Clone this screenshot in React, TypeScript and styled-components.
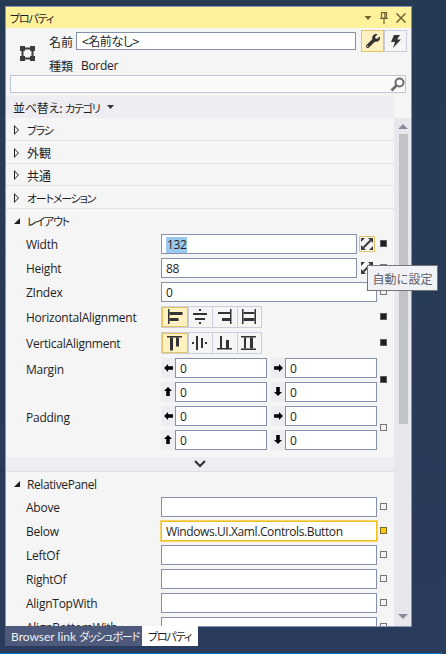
import React from "react";
import styled, { createGlobalStyle } from "styled-components";
import { FaWrench } from "react-icons/fa";

const Global = createGlobalStyle`
  html, body { margin: 0; padding: 0; background: #283a56; }
  * { box-sizing: border-box; }
  body { font-family: "Open Sans", "Noto Sans CJK JP", sans-serif; font-size: 12px; color: #1e1e1e; }
`;

const jp = `"Noto Sans CJK JP", "Noto Sans", sans-serif`;

const Root = styled.div`
  position: relative; width: 446px; height: 654px; overflow: hidden;
  padding: 6px 0 0 5px; display: flex; flex-direction: column;
  background: linear-gradient(180deg, #263a54 0%, #2a3b5b 100%);
`;
const Frame = styled.div`
  width: 407px; height: 621px; flex: none; border: 1px solid #8a94b8; background: #f5f5f5;
  display: flex; flex-direction: column; overflow: hidden;
`;
const Kana = styled.span`
  font-family: ${jp}; font-size: 11px; letter-spacing: -1.2px; font-feature-settings: "palt";
`;
const TitleBar = styled.div`
  height: 21px; flex: none; background: #fff29d; display: flex; align-items: center;
  padding: 0 5px 0 4px; font-family: ${jp}; font-size: 12px; color: #1e1e1e;
`;
const TitleText = styled.span` flex: 1; `;
const TitleTools = styled.div` display: flex; align-items: center; gap: 8px; `;
const Header = styled.div` flex: none; display: flex; flex-direction: column; padding-top: 2px; `;
const Identity = styled.div` display: flex; height: 45px; `;
const KindIcon = styled.div` width: 43px; display: flex; align-items: center; justify-content: center; padding-top: 1px; padding-right: 1px; `;
const IdentityRows = styled.div` flex: 1; display: flex; flex-direction: column; `;
const NameRow = styled.div` height: 22px; display: flex; align-items: center; font-family: ${jp}; `;
const FieldLabel = styled.span` width: 27px; flex: none; font-family: ${jp}; font-size: 12px; `;
const NameBox = styled.div`
  width: 280px; height: 18px; border: 1px solid #8591a8; background: #fff; padding-left: 5px;
  line-height: 15px; font-family: ${jp}; font-size: 12px; font-feature-settings: "palt"; letter-spacing: -0.4px;
`;
const ModeGroup = styled.div` display: flex; margin-left: 5px; `;
const ModeButton = styled.div<{ $on?: boolean }>`
  width: 23px; height: 22px; display: flex; align-items: center; justify-content: center;
  border: 1px solid ${p => (p.$on ? "#e5c365" : "#ccceDB")}; background: ${p => (p.$on ? "#fff2c0" : "#f5f5f5")};
`;
const TypeRow = styled.div` height: 20px; margin-top: 3px; display: flex; align-items: center; `;
const TypeValue = styled.span` margin-left: 5px; font-size: 12px; letter-spacing: -0.3px; `;
const SearchBox = styled.div`
  height: 18px; margin-left: 4px; width: 396px; background: #fafafa; border: 1px solid #c1c5d4;
  display: flex; justify-content: flex-end; align-items: center;
`;
const Body = styled.div` flex: 1; min-height: 0; display: flex; margin-top: 3px; `;
const Content = styled.div` width: 388px; flex: none; overflow: hidden; `;
const SortBar = styled.div`
  height: 22px; background: #eeeef2; display: flex; align-items: center; gap: 7px; padding-left: 7px;
  font-family: ${jp}; font-size: 12px;
`;
const SortLabel = styled.span` white-space: nowrap; font-feature-settings: "palt"; letter-spacing: -0.2px; `;
const Scrollbar = styled.div`
  position: relative; width: 17px; flex: none; display: flex; flex-direction: column; align-items: center;
  background: linear-gradient(#f5f5f5 0 22px, #e8e8ec 22px);
`;
const ScrollUp = styled.div`
  margin-top: 28px; width: 0; height: 0; border-left: 5px solid transparent; border-right: 5px solid transparent;
  border-bottom: 5px solid #8b8d9c;
`;
const ScrollThumb = styled.div` width: 9px; height: 290px; margin-top: 5px; margin-left: 1px; background: #c2c3c9; `;
const ScrollDown = styled.div`
  margin-top: auto; margin-bottom: 7px; width: 0; height: 0; border-left: 5px solid transparent; border-right: 5px solid transparent;
  border-top: 5px solid #8b8d9c;
`;
const Category = styled.div<{ $open?: boolean }>`
  height: 22.75px; display: flex; align-items: center; padding: 2px 0 0 8px; gap: 7px;
  border-bottom: ${p => (p.$open ? "none" : "1px solid #e3e3e6")}; font-family: ${jp}; font-size: 12px;
`;
const Hollow = styled.span`
  width: 0; height: 0; border-left: 5px solid #1e1e1e; border-top: 5px solid transparent; border-bottom: 5px solid transparent;
  position: relative; flex: none; margin-right: 1px;
  &::after { content: ""; position: absolute; left: -4.2px; top: -3px; border-left: 3px solid #f5f5f5; border-top: 3px solid transparent; border-bottom: 3px solid transparent; }
`;
const Expanded = styled.span`
  width: 0; height: 0; border-bottom: 6px solid #1e1e1e; border-left: 6px solid transparent; flex: none;
`;
const PanelTitle = styled.span` font-family: "Open Sans", sans-serif; letter-spacing: -0.4px; `;
const Rows = styled.div` display: flex; flex-direction: column; gap: 4px; padding: 2px 0 0 20px; `;
const Row = styled.div<{ $tall?: boolean }>`
  display: grid; grid-template-columns: 135px 216px 10px; align-items: ${p => (p.$tall ? "start" : "center")};
`;
const Name = styled.span<{ $tall?: boolean }>` font-size: 12px; padding-top: ${p => (p.$tall ? "3px" : "2px")}; white-space: nowrap; letter-spacing: -0.25px; `;
const Value = styled.div<{ $active?: boolean; $w?: number }>`
  height: 20px; width: ${p => p.$w ?? 216}px; background: #fff; padding-left: 4px;
  border: 1px solid ${p => (p.$active ? "#f0c020" : "#8591a8")}; line-height: 20px; font-size: 12px; white-space: nowrap;
  letter-spacing: -0.4px;
  box-shadow: ${p => (p.$active ? "0 0 0 1px #f6d566" : "none")};
`;
const Selected = styled.span` background: #99c9ef; display: inline-block; padding: 0 1px; line-height: 16px; `;
const Marker = styled.span<{ $state: "set" | "none" | "bound" }>`
  width: 7px; height: 7px; margin-left: 3px; display: block; justify-self: start; align-self: center;
  border: 1px solid ${p => (p.$state === "set" ? "#5d5d5d" : p.$state === "bound" ? "#7a6a30" : "#767676")};
  background: ${p => (p.$state === "set" ? "#1e1e1e" : p.$state === "bound" ? "#ffc90e" : "#f5f5f5")};
`;
const WithAuto = styled.div` display: flex; align-items: center; `;
const AutoButton = styled.div<{ $on?: boolean }>`
  width: 16px; height: 16px; margin-left: 2px; flex: none; display: flex; align-items: center; justify-content: center;
  border: 1px solid ${p => (p.$on ? "#e5c365" : "transparent")};
`;
const Segments = styled.div` display: flex; width: 101px; height: 22px; border: 1px solid #ccceDB; `;
const Segment = styled.div<{ $on?: boolean }>`
  flex: 1; display: flex; align-items: center; justify-content: center; background: ${p => (p.$on ? "#fff2c0" : "transparent")};
  border: ${p => (p.$on ? "1px solid #e5c365" : "none")}; border-left: ${p => (p.$on ? "1px solid #e5c365" : "1px solid #ccceDB")};
  &:first-child { border-left: ${p => (p.$on ? "1px solid #e5c365" : "none")}; }
`;
const Thickness = styled.div` display: grid; grid-template-columns: 106px 106px; column-gap: 4px; row-gap: 4px; `;
const Side = styled.div` display: flex; `;
const ArrowCell = styled.div` width: 14px; height: 20px; background: #eeeef2; display: flex; align-items: center; justify-content: center; `;
const Collapse = styled.div`
  height: 15px; margin-top: 7px; background: #eeeef2; border-bottom: 1px solid #e0e0e3; display: flex; align-items: center; justify-content: center;
`;
const TabStrip = styled.div` position: relative; display: flex; height: 20px; margin-top: -1px; flex: none; font-size: 12px; `;
const Tab = styled.div<{ $on?: boolean }>`
  height: 20px; display: flex; align-items: center; gap: 3px; padding: 0 6px; font-family: Lato, "Open Sans", sans-serif; white-space: nowrap;
  width: ${p => (p.$on ? "56px" : "137px")};
  background: ${p => (p.$on ? "#ffffff" : "#4d5a7c")}; color: ${p => (p.$on ? "#1e1e1e" : "#f0f0f0")};
`;
const StatusLine = styled.div` height: 1px; margin: auto 0 0 -5px; width: 442px; background: #007acc; flex: none; `;
const Tooltip = styled.div`
  position: absolute; left: 367px; top: 265px; width: 71px; height: 26px; background: #f1f2f7; border: 1px solid #767676;
  display: flex; align-items: center; justify-content: center; font-family: ${jp}; font-size: 12px; color: #5f6066;
`;

const Border = () => (
  <svg width="15" height="15" viewBox="0 0 15 15" fill="#3c3c3c">
    <path d="M0 0h5v1.5h5V0h5v5h-1.5v5H15v5h-5v-1.5H5V15H0v-5h1.5V5H0zM3.5 5v5H5v1.5h5V10h1.5V5H10V3.5H5V5z" />
  </svg>
);
const Bolt = () => (
  <svg width="10" height="13" viewBox="0 0 10 13" fill="#333"><path d="M3 0h6L6 4.5h4L2 13l2-6H0z" /></svg>
);
const Search = () => (
  <svg width="15" height="15" viewBox="0 0 15 15" fill="none" stroke="#6d6d6d">
    <circle cx="9.5" cy="5.5" r="4" strokeWidth="2" />
    <path d="M6.5 8.5L1.5 13.5" strokeWidth="2.6" />
  </svg>
);
const Pin = () => (
  <svg width="8" height="12" viewBox="0 0 8 12" fill="none" stroke="#6d6330" strokeWidth="1.2">
    <path d="M1.5 .6h5v5.4h-5zM4.8 1v5M0 6.5h8M4 7v5" />
  </svg>
);
const Close = () => (
  <svg width="10" height="10" viewBox="0 0 10 10" stroke="#6d6330" strokeWidth="1.5"><path d="M.5.5l9 9M9.5.5l-9 9" /></svg>
);
const Caret = ({ color, w = 7 }: { color: string; w?: number }) => (
  <svg width={w} height="4" viewBox="0 0 7 4" fill={color}><path d="M0 0h7L3.5 4z" /></svg>
);
const Auto = () => (
  <svg width="12" height="12" viewBox="0 0 12 12" fill="#3a3a3a">
    <path d="M0 0h4L0 4zM12 12H8l4-4zM12 0v5L7 0zM0 12V7l5 5z" />
    <path d="M2.5 9.5l7-7" stroke="#3a3a3a" strokeWidth="2" />
  </svg>
);
const Chevron = () => (
  <svg width="12" height="8" viewBox="0 0 12 8" fill="none" stroke="#333" strokeWidth="2.2"><path d="M1 1l5 5 5-5" /></svg>
);
const arrowPaths: Record<string, string> = {
  left: "M0 4.5L4.5 0v2.5H10v4H4.5V9z",
  right: "M10 4.5L5.5 0v2.5H0v4h5.5V9z",
  up: "M4.5 0L9 4.5H6.5V10h-4V4.5H0z",
  down: "M4.5 10L9 5.5H6.5V0h-4v5.5H0z",
};
const Arrow = ({ dir }: { dir: string }) => {
  const flat = dir === "left" || dir === "right";
  return (
    <svg width={flat ? 9 : 8} height={flat ? 8 : 9} viewBox={flat ? "0 0 10 9" : "0 0 9 10"} fill="#000">
      <path d={arrowPaths[dir]} />
    </svg>
  );
};
const alignGlyphs: Record<string, number[][]> = {
  hl: [[1, 0, 1.5, 15], [2.5, 3, 13, 3], [2.5, 9, 9, 3]],
  hc: [[7, 0, 2, 2], [1, 4, 14, 2], [3, 9, 10, 2], [7, 13, 2, 2]],
  hr: [[13, 0, 1.5, 15], [1, 3, 12, 2], [5, 9, 8, 3]],
  hs: [[1, 0, 1.5, 15], [13.5, 0, 1.5, 15], [2.5, 3, 11, 2], [2.5, 9, 11, 3]],
  vt: [[0, 1, 15, 1.5], [3, 2.5, 3, 13], [9, 2.5, 3, 9]],
  vc: [[0, 7, 2, 2], [4, 1, 2, 14], [9, 3, 2, 10], [13, 7, 2, 2]],
  vb: [[0, 13, 15, 1.5], [3, 1, 2, 12], [9, 5, 3, 8]],
  vs: [[0, 1, 15, 1.5], [0, 13.5, 15, 1.5], [3, 2.5, 2, 11], [9, 2.5, 3, 11]],
};
const Align = ({ name }: { name: string }) => (
  <svg width="16" height="16" viewBox="0 0 16 16" fill="#333">
    {alignGlyphs[name].map((r, i) => <rect key={i} x={r[0]} y={r[1]} width={r[2]} height={r[3]} />)}
  </svg>
);

const SegmentRow = ({ label, names }: { label: string; names: string[] }) => (
  <Row>
    <Name>{label}</Name>
    <Segments>
      {names.map((n, i) => <Segment key={n} $on={i === 0}><Align name={n} /></Segment>)}
    </Segments>
    <Marker $state="set" />
  </Row>
);
const ThicknessRow = ({ label, state }: { label: string; state: "set" | "none" }) => (
  <Row $tall>
    <Name $tall>{label}</Name>
    <Thickness>
      {["left", "right", "up", "down"].map(d => (
        <Side key={d}><ArrowCell><Arrow dir={d} /></ArrowCell><Value $w={92}>0</Value></Side>
      ))}
    </Thickness>
    <Marker $state={state} />
  </Row>
);
const panelRows: { name: string; value?: string; bound?: boolean }[] = [
  { name: "Above" },
  { name: "Below", value: "Windows.UI.Xaml.Controls.Button", bound: true },
  { name: "LeftOf" },
  { name: "RightOf" },
  { name: "AlignTopWith" },
  { name: "AlignBottomWith" },
];
const categories = [
  { label: "ブラシ", kana: true },
  { label: "外観", kana: false },
  { label: "共通", kana: false },
  { label: "オートメーション", kana: true },
];

export default function App() {
  return (
    <Root>
      <Global />
      <Frame>
        <TitleBar>
          <TitleText><Kana>プロパティ</Kana></TitleText>
          <TitleTools><Caret color="#6d6330" w={8} /><Pin /><Close /></TitleTools>
        </TitleBar>
        <Header>
          <Identity>
            <KindIcon><Border /></KindIcon>
            <IdentityRows>
              <NameRow>
                <FieldLabel>名前</FieldLabel>
                <NameBox>&lt;名前なし&gt;</NameBox>
                <ModeGroup>
                  <ModeButton $on><FaWrench size={14} color="#333" /></ModeButton>
                  <ModeButton><Bolt /></ModeButton>
                </ModeGroup>
              </NameRow>
              <TypeRow>
                <FieldLabel>種類</FieldLabel>
                <TypeValue>Border</TypeValue>
              </TypeRow>
            </IdentityRows>
          </Identity>
          <SearchBox><Search /></SearchBox>
        </Header>
        <Body>
          <Content>
            <SortBar>
              <SortLabel>並べ替え: <Kana>カテゴリ</Kana></SortLabel>
              <Caret color="#333" />
            </SortBar>
            {categories.map(c => (
              <Category key={c.label}><Hollow />{c.kana ? <Kana>{c.label}</Kana> : c.label}</Category>
            ))}
            <Category $open><Expanded /><Kana>レイアウト</Kana></Category>
            <Rows>
              <Row>
                <Name>Width</Name>
                <WithAuto>
                  <Value $w={196}><Selected>132</Selected></Value>
                  <AutoButton $on><Auto /></AutoButton>
                </WithAuto>
                <Marker $state="set" />
              </Row>
              <Row>
                <Name>Height</Name>
                <WithAuto>
                  <Value $w={196}>88</Value>
                  <AutoButton><Auto /></AutoButton>
                </WithAuto>
                <Marker $state="none" />
              </Row>
              <Row>
                <Name>ZIndex</Name>
                <Value>0</Value>
                <Marker $state="none" />
              </Row>
              <SegmentRow label="HorizontalAlignment" names={["hl", "hc", "hr", "hs"]} />
              <SegmentRow label="VerticalAlignment" names={["vt", "vc", "vb", "vs"]} />
              <ThicknessRow label="Margin" state="set" />
              <ThicknessRow label="Padding" state="none" />
            </Rows>
            <Collapse><Chevron /></Collapse>
            <Category $open><Expanded /><PanelTitle>RelativePanel</PanelTitle></Category>
            <Rows>
              {panelRows.map(r => (
                <Row key={r.name}>
                  <Name>{r.name}</Name>
                  <Value $active={r.bound}>{r.value}</Value>
                  <Marker $state={r.bound ? "bound" : "none"} />
                </Row>
              ))}
            </Rows>
          </Content>
          <Scrollbar>
            <ScrollUp />
            <ScrollThumb />
            <ScrollDown />
          </Scrollbar>
        </Body>
      </Frame>
      <TabStrip>
        <Tab>Browser link <Kana>ダッシュボード</Kana></Tab>
        <Tab $on><Kana>プロパティ</Kana></Tab>
      </TabStrip>
      <StatusLine />
      <Tooltip>自動に設定</Tooltip>
    </Root>
  );
}
